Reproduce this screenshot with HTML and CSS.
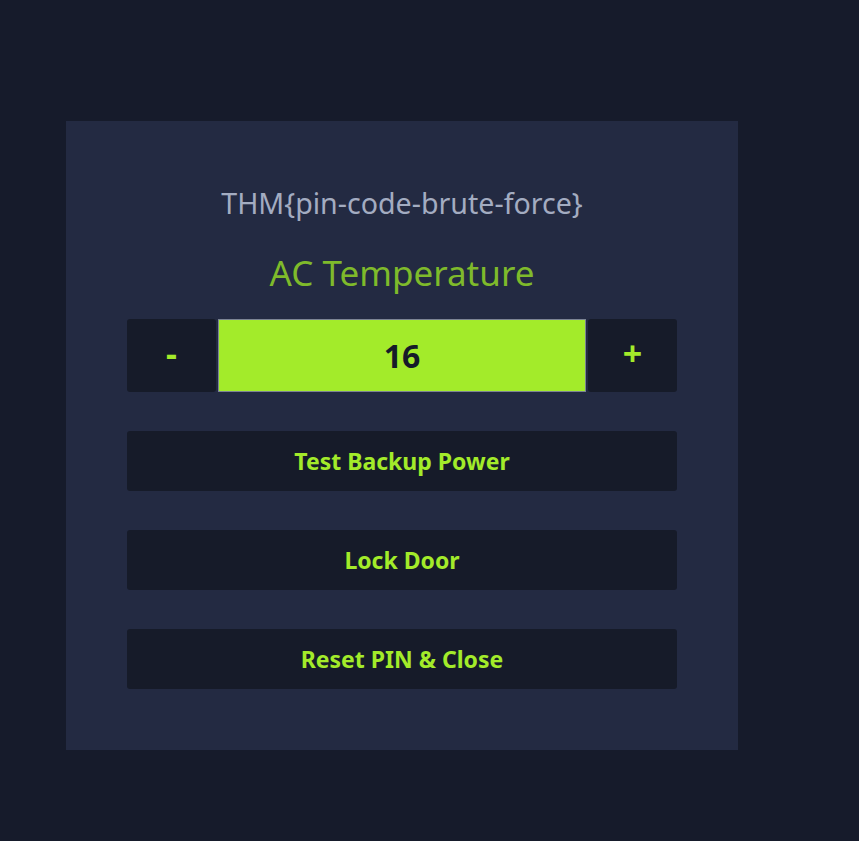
FILE: index.html
```html
<!DOCTYPE html>
<html>
<head>
<meta charset="utf-8">
<link rel="stylesheet" href="styles.css">
</head>
<body>
<div class="panel">
  <div class="flag">THM{pin-code-brute-force}</div>
  <h1 class="title">AC Temperature</h1>
  <div class="temp-row">
    <button class="step">-</button>
    <div class="value">16</div>
    <button class="step">+</button>
  </div>
  <button class="action">Test Backup Power</button>
  <button class="action">Lock Door</button>
  <button class="action">Reset PIN &amp; Close</button>
</div>
</body>
</html>
```
FILE: styles.css
```css
html, body {
  margin: 0;
  padding: 0;
  background: #161b2b;
  height: 100%;
}
body {
  font-family: "Noto Sans", "Open Sans", sans-serif;
  padding-top: 121px;
  padding-left: 66px;
  box-sizing: border-box;
}
.panel {
  width: 672px;
  height: 629px;
  box-sizing: border-box;
  background: #232a42;
  padding: 64px 61px 0;
  display: flex;
  flex-direction: column;
}
.flag {
  text-align: center;
  color: #a3acc1;
  font-size: 28.6px;
  line-height: 36px;
}
.title {
  margin: 32px 0 0;
  text-align: center;
  color: #7fba2b;
  font-weight: 400;
  font-size: 35px;
  line-height: 40px;
}
.temp-row {
  margin-top: 26px;
  display: flex;
  height: 73px;
  gap: 2px;
}
.step {
  width: 89px;
  border: none;
  border-radius: 3px;
  background: #161b29;
  color: #a3eb2a;
  font-family: inherit;
  font-weight: 700;
  font-size: 34px;
  padding: 0 0 6px;
}
.value {
  flex: 1;
  background: #a3eb2a;
  border: 1px solid #7c8494;
  color: #161b29;
  font-weight: 700;
  font-size: 32px;
  display: flex;
  align-items: center;
  justify-content: center;
}
.action {
  margin-top: 39px;
  height: 60px;
  border: none;
  border-radius: 3px;
  background: #161b29;
  color: #a3eb2a;
  font-family: inherit;
  font-weight: 700;
  font-size: 23px;
}
```
